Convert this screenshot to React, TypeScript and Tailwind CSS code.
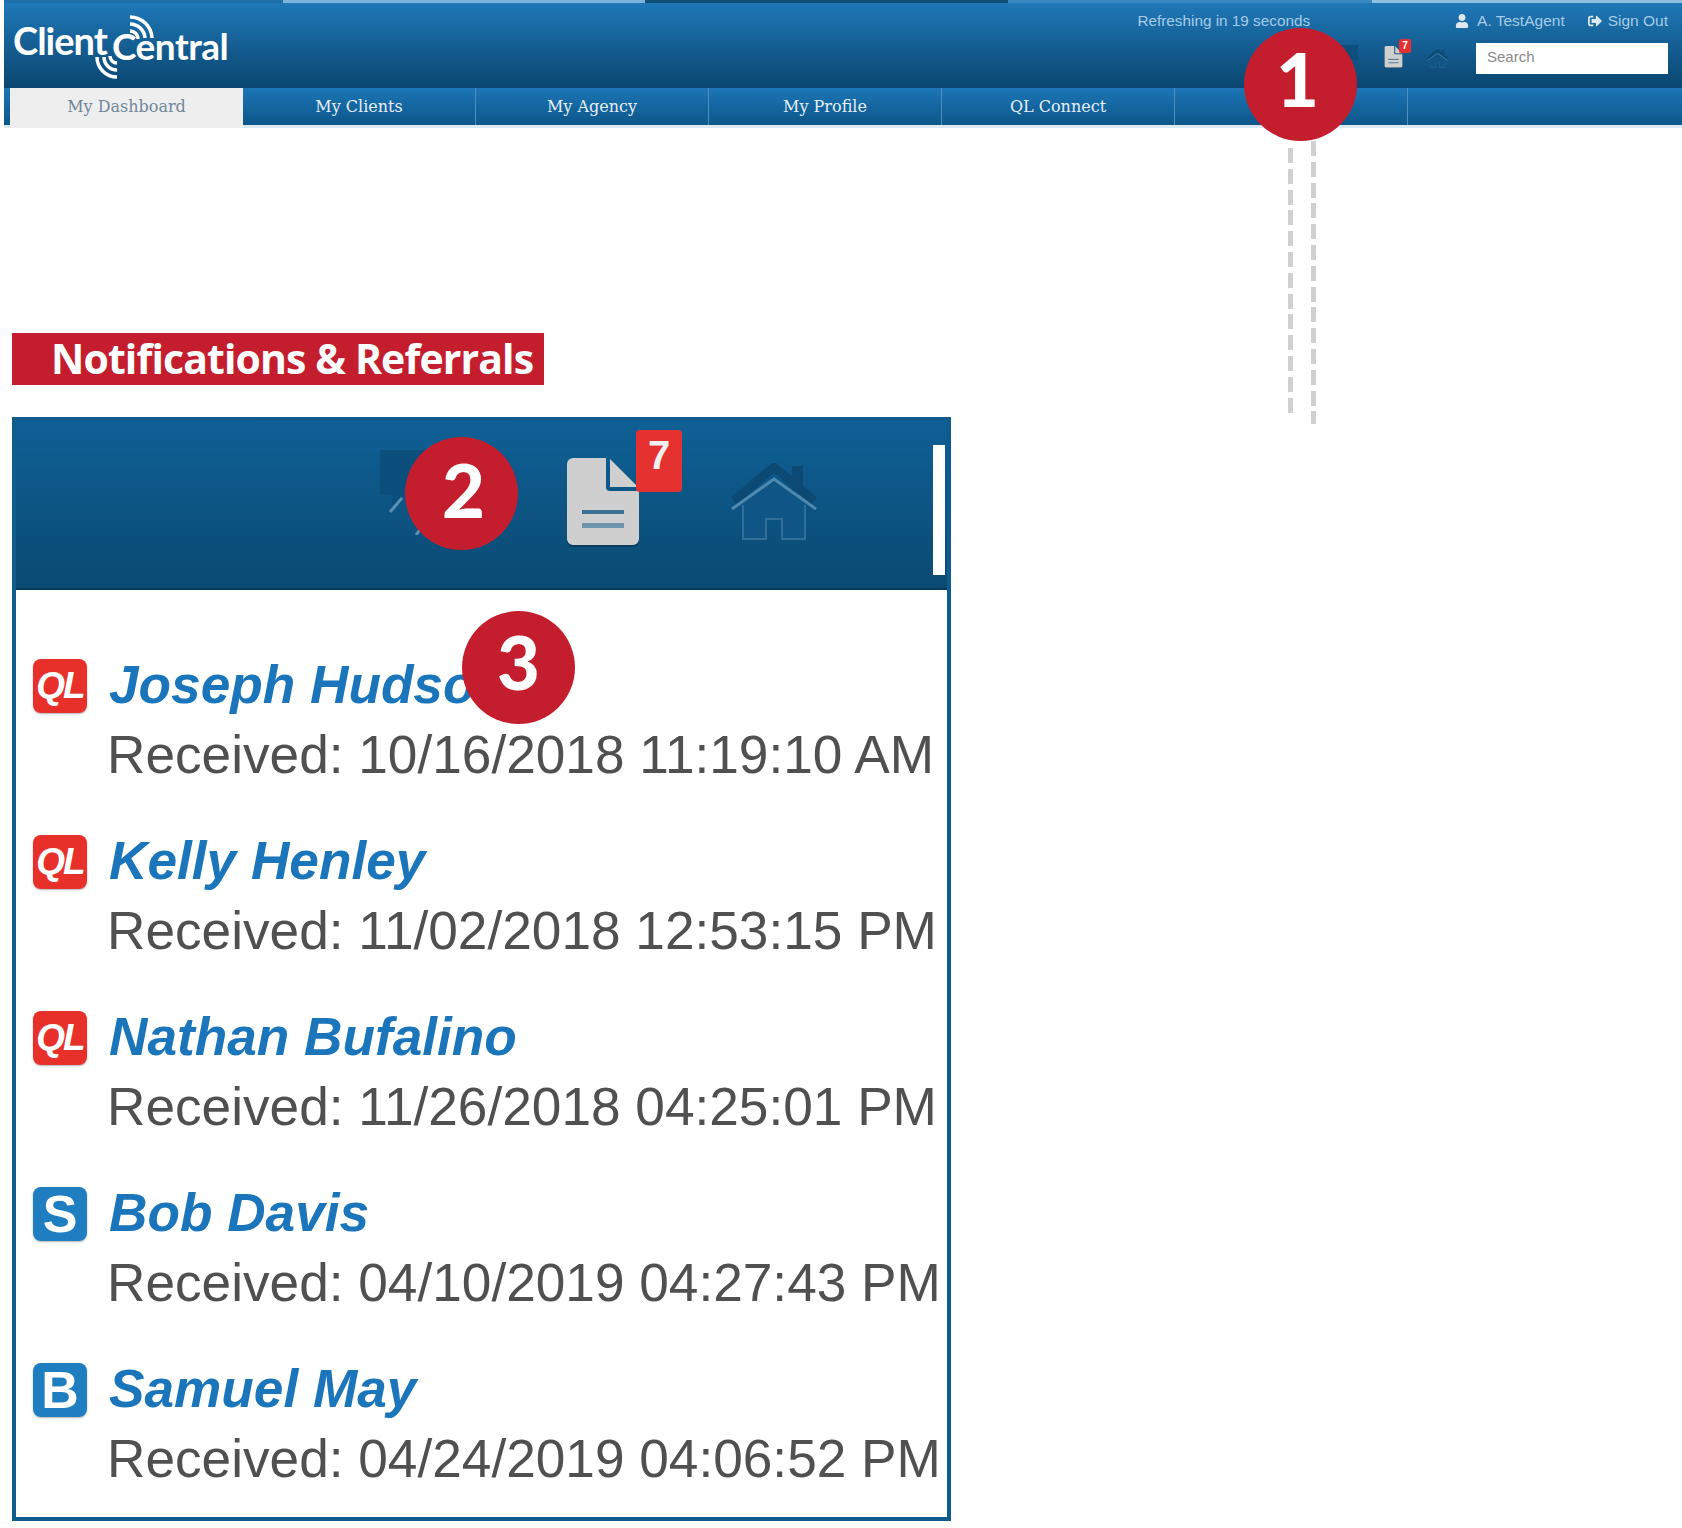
import { FaSignOutAlt, FaUser } from 'react-icons/fa';

const sans = "font-['Liberation_Sans',Arial,sans-serif]";

const tabs = ['My Clients', 'My Agency', 'My Profile', 'QL Connect', ''];

const rows = [
  { badge: 'QL', name: 'Joseph Hudson', received: 'Received: 10/16/2018 11:19:10 AM' },
  { badge: 'QL', name: 'Kelly Henley', received: 'Received: 11/02/2018 12:53:15 PM' },
  { badge: 'QL', name: 'Nathan Bufalino', received: 'Received: 11/26/2018 04:25:01 PM' },
  { badge: 'S', name: 'Bob Davis', received: 'Received: 04/10/2019 04:27:43 PM' },
  { badge: 'B', name: 'Samuel May', received: 'Received: 04/24/2019 04:06:52 PM' },
];

const DocIcon = ({ className }: { className: string }) => (
  <svg viewBox="0 0 72 89" className={className}>
    <path
      d="M6 2H38V30a4 4 0 0 0 4 4H72V83a6 6 0 0 1-6 6H6a6 6 0 0 1-6-6V8a6 6 0 0 1 6-6Z"
      fill="#083a5c"
    />
    <path
      d="M6 0H39V29a4 4 0 0 0 4 4H72V81a6 6 0 0 1-6 6H6a6 6 0 0 1-6-6V6a6 6 0 0 1 6-6Z"
      fill="#cfcfcf"
    />
    <path d="M43 1 71 29H43Z" fill="#cfcfcf" />
    <rect x="15" y="52" width="42" height="4" fill="#3f6f92" />
    <rect x="15" y="65" width="42" height="5" fill="#6d93ad" />
  </svg>
);

const HomeIcon = ({ className }: { className: string }) => (
  <svg viewBox="0 0 88 80" fill="none" className={className}>
    <rect x="62" y="3" width="11" height="26" fill="#0c4a74" />
    <path d="M4 38 44 4 84 38" stroke="#0c4a74" strokeWidth="9" />
    <path d="M14 38V76H36V56H52V76H74V38L44 14Z" fill="#0f5686" />
    <path d="M2 46 44 16 86 46" stroke="#4f89ad" strokeWidth="3" />
    <path d="M13 42V76H36V56H52V76H75V42" stroke="#2f6f98" strokeWidth="2" />
  </svg>
);

const ChatIcon = ({ className }: { className: string }) => (
  <svg viewBox="0 0 70 85" fill="none" className={className}>
    <path d="M0 0H70V45H24L12 60V45H0Z" fill="#0c4f7d" />
    <path d="M10 62 22 48M36 85l6-8" stroke="#5c8fb0" strokeWidth="3" />
  </svg>
);

const Circle = ({ n, className, digit }: { n: number; className: string; digit: string }) => (
  <div
    className={`absolute flex h-[113px] w-[113px] items-center justify-center rounded-full bg-[#c41e2e] pb-[8px] font-['Lato',sans-serif] text-[74px] font-black text-white ${className}`}
  >
    <span className={digit}>{n}</span>
  </div>
);

const App = () => {
  return (
    <div className="relative h-[1528px] w-[1682px] overflow-hidden bg-white">
      {/* app header */}
      <div className="ml-[4px]">
        <div className="flex h-[3px]">
          <div className="w-[279px] bg-[#1e6ea8]" />
          <div className="w-[362px] bg-[#7db3d8]" />
          <div className="w-[363px] bg-[#0e4f78]" />
          <div className="w-[364px] bg-[#3a88c0]" />
          <div className="w-[310px] bg-[#8fc0e0]" />
        </div>

        <div className="flex h-[85px] bg-gradient-to-b from-[#1f78b8] to-[#0a4670]">
          <div className="relative h-[85px] w-[240px] text-white">
            <div className="absolute left-[9px] top-[15px] font-['Lato',sans-serif] text-[38px] font-bold leading-[44px] tracking-[-1px]">
              Client
            </div>
            <div className="absolute left-[108px] top-[21px] font-['Lato',sans-serif] text-[37px] font-bold leading-[44px] tracking-[-0.5px]">
              Central
            </div>
            <svg viewBox="0 0 240 85" fill="none" className="absolute inset-0" stroke="white" strokeWidth="3.5">
              <path d="M126 14a22 22 0 0 1 22 21" />
              <path d="M126 21a15 15 0 0 1 15 14" />
              <path d="M126 28a8 8 0 0 1 8 8" />
              <path d="M93 54a20 20 0 0 0 20 20" />
              <path d="M100 54a13 13 0 0 0 13 13" />
              <path d="M106 53a7 7 0 0 0 7 7" />
            </svg>
          </div>

          <div className={`ml-auto pr-[14px] ${sans}`}>
            <div className="flex h-[36px] items-center justify-end text-[15.5px] text-[#a6cbe6]">
              <span className="mr-[145px] text-[15.3px]">Refreshing in 19 seconds</span>
              <FaUser className="mr-[8px] h-[14px] w-[14px] text-[#dfe8ef]" />
              <span className="mr-[23px]">A. TestAgent</span>
              <FaSignOutAlt className="mr-[6px] h-[14px] w-[14px] text-[#dfe8ef]" />
              <span>Sign Out</span>
            </div>
            <div className="flex items-center justify-end pt-[4px]">
              <ChatIcon className="mr-[25px] h-[28px] w-[25px]" />
              <div className="relative mb-[4px] mr-[24px] h-[22px] w-[19px]">
                <DocIcon className="h-[22px] w-[19px]" />
                <div className="absolute left-[15px] top-[-7px] flex h-[14px] w-[12px] items-center justify-center rounded-[2px] bg-[#e53230] text-[10px] font-bold text-white">
                  7
                </div>
              </div>
              <HomeIcon className="mr-[28px] h-[20px] w-[21px]" />
              <div className="flex h-[31px] w-[192px] items-center bg-white pb-[2px] pl-[11px] text-[15px] text-[#8a8a8a]">
                Search
              </div>
            </div>
          </div>
        </div>

        <div className="box-border flex h-[40px] border-b-[3px] border-[#dceaf3] bg-gradient-to-b from-[#1c76b7] to-[#0c5689] pl-[6px] font-['DejaVu_Serif',serif] text-[16px] text-[#e6eff6]">
          <div className="flex h-[40px] w-[233px] shrink-0 items-center justify-center bg-[#eeeeee] pb-[3px] text-[#70869a]">
            My Dashboard
          </div>
          {tabs.map((tab, i) => (
            <div
              key={i}
              className="flex h-[37px] w-[233px] shrink-0 items-center justify-center border-r border-[#4f8fba]"
            >
              {tab}
            </div>
          ))}
        </div>
      </div>

      {/* section title */}
      <div className="ml-[12px] mt-[205px] flex h-[52px] w-[532px] items-center whitespace-nowrap bg-[#c41e2e] pl-[39px] font-['Open_Sans',sans-serif] text-[41px] font-bold tracking-[-0.9px] text-white">
        Notifications &amp; Referrals
      </div>

      {/* enlarged panel */}
      <div className="ml-[12px] mt-[32px] box-border h-[1104px] w-[939px] border-4 border-[#0f5c8c]">
        <div className="flex h-[169px] border-b-2 border-[#083a5c] bg-gradient-to-b from-[#0f6096] to-[#0a4a72]">
          <ChatIcon className="ml-[364px] mt-[29px] h-[85px] w-[70px]" />
          <div className="relative ml-[117px] mt-[37px] h-[89px] w-[72px]">
            <DocIcon className="h-[89px] w-[72px]" />
            <div className={`absolute left-[69px] top-[-28px] flex h-[62px] w-[46px] items-start justify-center rounded-[4px] bg-[#e53230] text-[40px] font-bold leading-[50px] text-[#f0f0f0] ${sans}`}>
              7
            </div>
          </div>
          <HomeIcon className="ml-[91px] mt-[42px] h-[80px] w-[88px]" />
          <div className="ml-auto mr-[2px] mt-[24px] h-[130px] w-[12px] bg-white" />
        </div>

        <div className={`flex flex-col gap-[40px] pl-[17px] pt-[63px] ${sans}`}>
          {rows.map((row) => (
            <div key={row.name} className="flex gap-[20px]">
              <div
                className={`mt-[6px] flex h-[54px] w-[54px] shrink-0 items-center justify-center rounded-[8px] font-bold text-white shadow-[0_1px_2px_rgba(0,0,0,0.3)] ${
                  row.badge === 'QL'
                    ? 'bg-[#e8302a] text-[37px] italic tracking-[-2px]'
                    : 'bg-[#1f7ec0] text-[52px]'
                }`}
              >
                {row.badge}
              </div>
              <div className="whitespace-nowrap text-[53.2px] leading-[68px]">
                <div className="-mt-[2px] mb-[2px] pl-[2px] font-bold italic text-[#1a75bb]">{row.name}</div>
                <div className="text-[#505050]">{row.received}</div>
              </div>
            </div>
          ))}
        </div>
      </div>

      {/* callouts */}
      <div className="absolute left-[1288px] top-[148px] h-[265px] w-[5px] bg-[repeating-linear-gradient(to_bottom,#d0d0d0_0,#d0d0d0_15px,transparent_15px,transparent_20.8px)]" />
      <div className="absolute left-[1311px] top-[141px] h-[283px] w-[5px] bg-[repeating-linear-gradient(to_bottom,#d0d0d0_0,#d0d0d0_15px,transparent_15px,transparent_20.8px)]" />
      <Circle n={1} className="left-[1244px] top-[28px]" digit="-translate-x-[3px] -translate-y-[2px]" />
      <Circle n={2} className="left-[405px] top-[437px]" digit="translate-x-[2px]" />
      <Circle n={3} className="left-[462px] top-[611px]" digit="-translate-y-[2px]" />
    </div>
  );
};

export default App;
